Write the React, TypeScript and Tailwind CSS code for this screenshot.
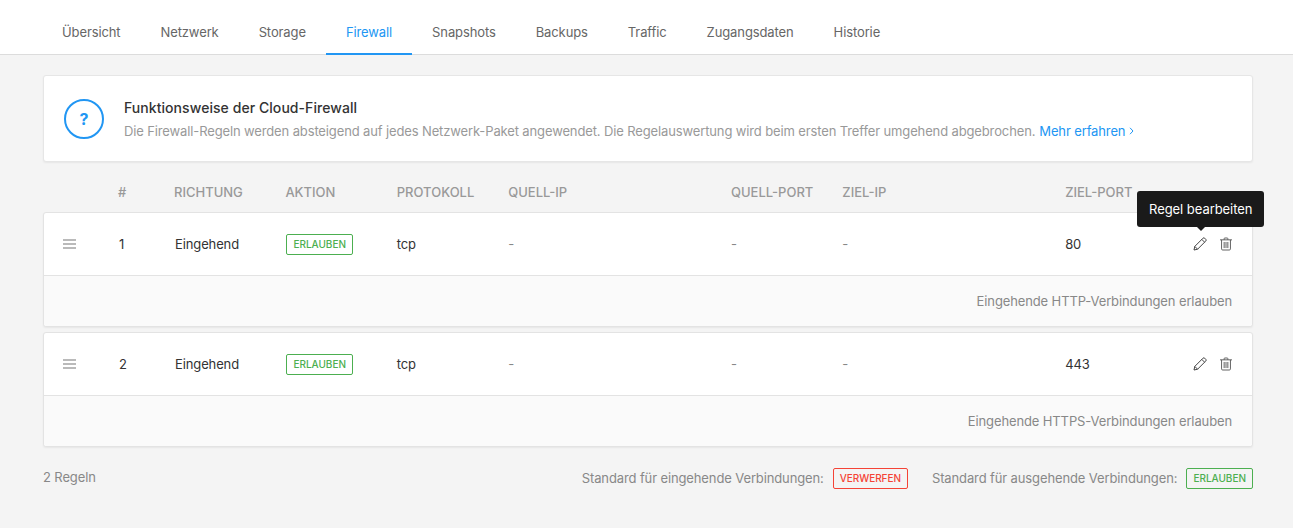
import React from "react";

const GRID =
  "grid grid-cols-[55px_56px_111.4px_111.4px_111.4px_222.8px_111.4px_222.8px_1fr] items-center pl-[19px] pr-[19px]";

const tabs = ["Übersicht", "Netzwerk", "Storage", "Firewall", "Snapshots", "Backups", "Traffic", "Zugangsdaten", "Historie"];

function Badge({ children, red }: { children: React.ReactNode; red?: boolean }) {
  return (
    <span
      className={
        "inline-flex h-[21px] items-center rounded-[2px] border px-[6px] text-[10px] font-medium " +
        (red ? "tracking-[-0.05px] border-[#f44336] text-[#f44336]" : "tracking-normal border-[#4caf50] text-[#4caf50]")
      }
    >
      {children}
    </span>
  );
}

function Pencil() {
  return (
    <svg width="14" height="14" viewBox="0 0 14 14" fill="none" stroke="#444" strokeWidth="1" strokeLinejoin="round">
      <path d="M1 13l.8-3.6L10 1.2a1.2 1.2 0 0 1 1.7 0l1.1 1.1a1.2 1.2 0 0 1 0 1.7L4.6 12.2 1 13z" />
      <path d="M8.8 2.4l2.8 2.8M1.8 9.4l2.8 2.8" />
    </svg>
  );
}

function Trash() {
  return (
    <svg width="12" height="14" viewBox="0 0 13 14" fill="none" stroke="#555" strokeWidth="1">
      <path d="M0 2.5h13M4.5 2.5V1.2a.7.7 0 0 1 .7-.7h2.6a.7.7 0 0 1 .7.7v1.3" />
      <path d="M1.7 2.5v9.8a1.2 1.2 0 0 0 1.2 1.2h7.2a1.2 1.2 0 0 0 1.2-1.2V2.5" />
      <path d="M4.5 4.8v6.6M6.5 4.8v6.6M8.5 4.8v6.6" />
    </svg>
  );
}

function Drag() {
  return (
    <svg width="13" height="10" viewBox="0 0 13 10" stroke="#777" strokeWidth="1.2">
      <path d="M0 1h13M0 5h13M0 9h13" />
    </svg>
  );
}

function Rule({ n, port, note, tip }: { n: number; port: string; note: string; tip?: boolean }) {
  return (
    <div className="rounded-[3px] border border-[#e3e3e3] bg-white shadow-[0_1px_2px_rgba(0,0,0,0.06)]">
      <div className={GRID + " h-[62px] text-[13px] text-[#333]"}>
        <Drag />
        <span className="pl-[1px] pt-[1px]">{n}</span>
        <span className="pl-[1px] pt-[1px]">Eingehend</span>
        <span className="flex pl-[1px]"><Badge>ERLAUBEN</Badge></span>
        <span className="pt-[1px]">tcp</span>
        <span className="pt-[1px] text-[#888]">-</span>
        <span className="pt-[1px] text-[#888]">-</span>
        <span className="pt-[1px] text-[#888]">-</span>
        <div className="flex items-center justify-between">
          <span className="pt-[1px]">{port}</span>
          <div className="relative mr-[1px] flex items-center gap-[13px]">
            {tip && (
              <div className="absolute bottom-[24px] left-[-56px] whitespace-nowrap rounded-[3px] bg-[#1a1a1a] px-3 py-[10px] text-[13px] leading-4 tracking-[-0.05px] text-white">
                Regel bearbeiten
                <span className="absolute bottom-[-4px] left-[60px] h-0 w-0 border-x-[4px] border-t-[4px] border-x-transparent border-t-[#1a1a1a]" />
              </div>
            )}
            <Pencil />
            <Trash />
          </div>
        </div>
      </div>
      <div className="flex h-[51px] items-center justify-end rounded-b-[3px] border-t border-[#e3e3e3] bg-[#fafafa] px-5 pt-[1px] text-[13px] text-[#888]">
        {note}
      </div>
    </div>
  );
}

export default function App() {
  return (
    <div className="min-h-[528px] bg-[#f4f4f4] font-['Inter',sans-serif] tracking-[-0.12px]">
      <nav className="flex h-[55px] items-end border-b border-[#dcdcdc] bg-white pl-[42px] text-[13px] tracking-[-0.11px] text-[#666]">
        {tabs.map((t) => (
          <div
            key={t}
            className={
              "mb-[-1px] flex h-[55px] items-center border-b-2 px-5 pt-[12px] " +
              (t === "Firewall" ? "border-[#2196f3] text-[#2196f3]" : "border-transparent")
            }
          >
            {t}
          </div>
        ))}
      </nav>
      <main className="pl-[43px] pr-[40px] pt-5">
        <section className="flex h-[87px] items-center rounded-[3px] border border-[#e6e6e6] bg-white pl-5 shadow-[0_1px_2px_rgba(0,0,0,0.06)]">
          <div className="flex h-[40px] w-[40px] items-center justify-center rounded-full border-2 border-[#2196f3] text-[16px] font-bold text-[#2196f3]">
            ?
          </div>
          <div className="ml-[20px] pt-[1px]">
            <h2 className="text-[14px] font-medium leading-5 tracking-[0.06px] text-[#333]">Funktionsweise der Cloud-Firewall</h2>
            <p className="mt-[3px] flex items-center text-[13px] leading-5 tracking-[-0.13px] text-[#999]">
              <span>Die Firewall-Regeln werden absteigend auf jedes Netzwerk-Paket angewendet. Die Regelauswertung wird beim ersten Treffer umgehend abgebrochen.</span>
              <span className="ml-[4px] text-[#2196f3]">Mehr erfahren</span>
              <svg className="ml-[4px]" width="5" height="8" viewBox="0 0 5 8" fill="none" stroke="#2196f3" strokeWidth="1">
                <path d="M1 .8L4 4 1 7.2" />
              </svg>
            </p>
          </div>
        </section>
        <div className={GRID + " ml-[1px] mt-[10px] h-[40px] pt-[1px] text-[13px] font-medium tracking-normal text-[#999]"}>
          <span />
          <span>#</span>
          <span>RICHTUNG</span>
          <span>AKTION</span>
          <span>PROTOKOLL</span>
          <span>QUELL-IP</span>
          <span>QUELL-PORT</span>
          <span>ZIEL-IP</span>
          <span>ZIEL-PORT</span>
        </div>
        <div className="flex flex-col gap-[5px]">
          <Rule n={1} port="80" note="Eingehende HTTP-Verbindungen erlauben" tip />
          <Rule n={2} port="443" note="Eingehende HTTPS-Verbindungen erlauben" />
        </div>
        <footer className="mt-[21px] flex items-center justify-between text-[13px] text-[#888]">
          <span className="pb-[1px]">2 Regeln</span>
          <div className="flex items-center">
            <span className="mr-[9px]">Standard für eingehende Verbindungen:</span>
            <Badge red>VERWERFEN</Badge>
            <span className="ml-[24px] mr-[9px]">Standard für ausgehende Verbindungen:</span>
            <Badge>ERLAUBEN</Badge>
          </div>
        </footer>
      </main>
    </div>
  );
}
